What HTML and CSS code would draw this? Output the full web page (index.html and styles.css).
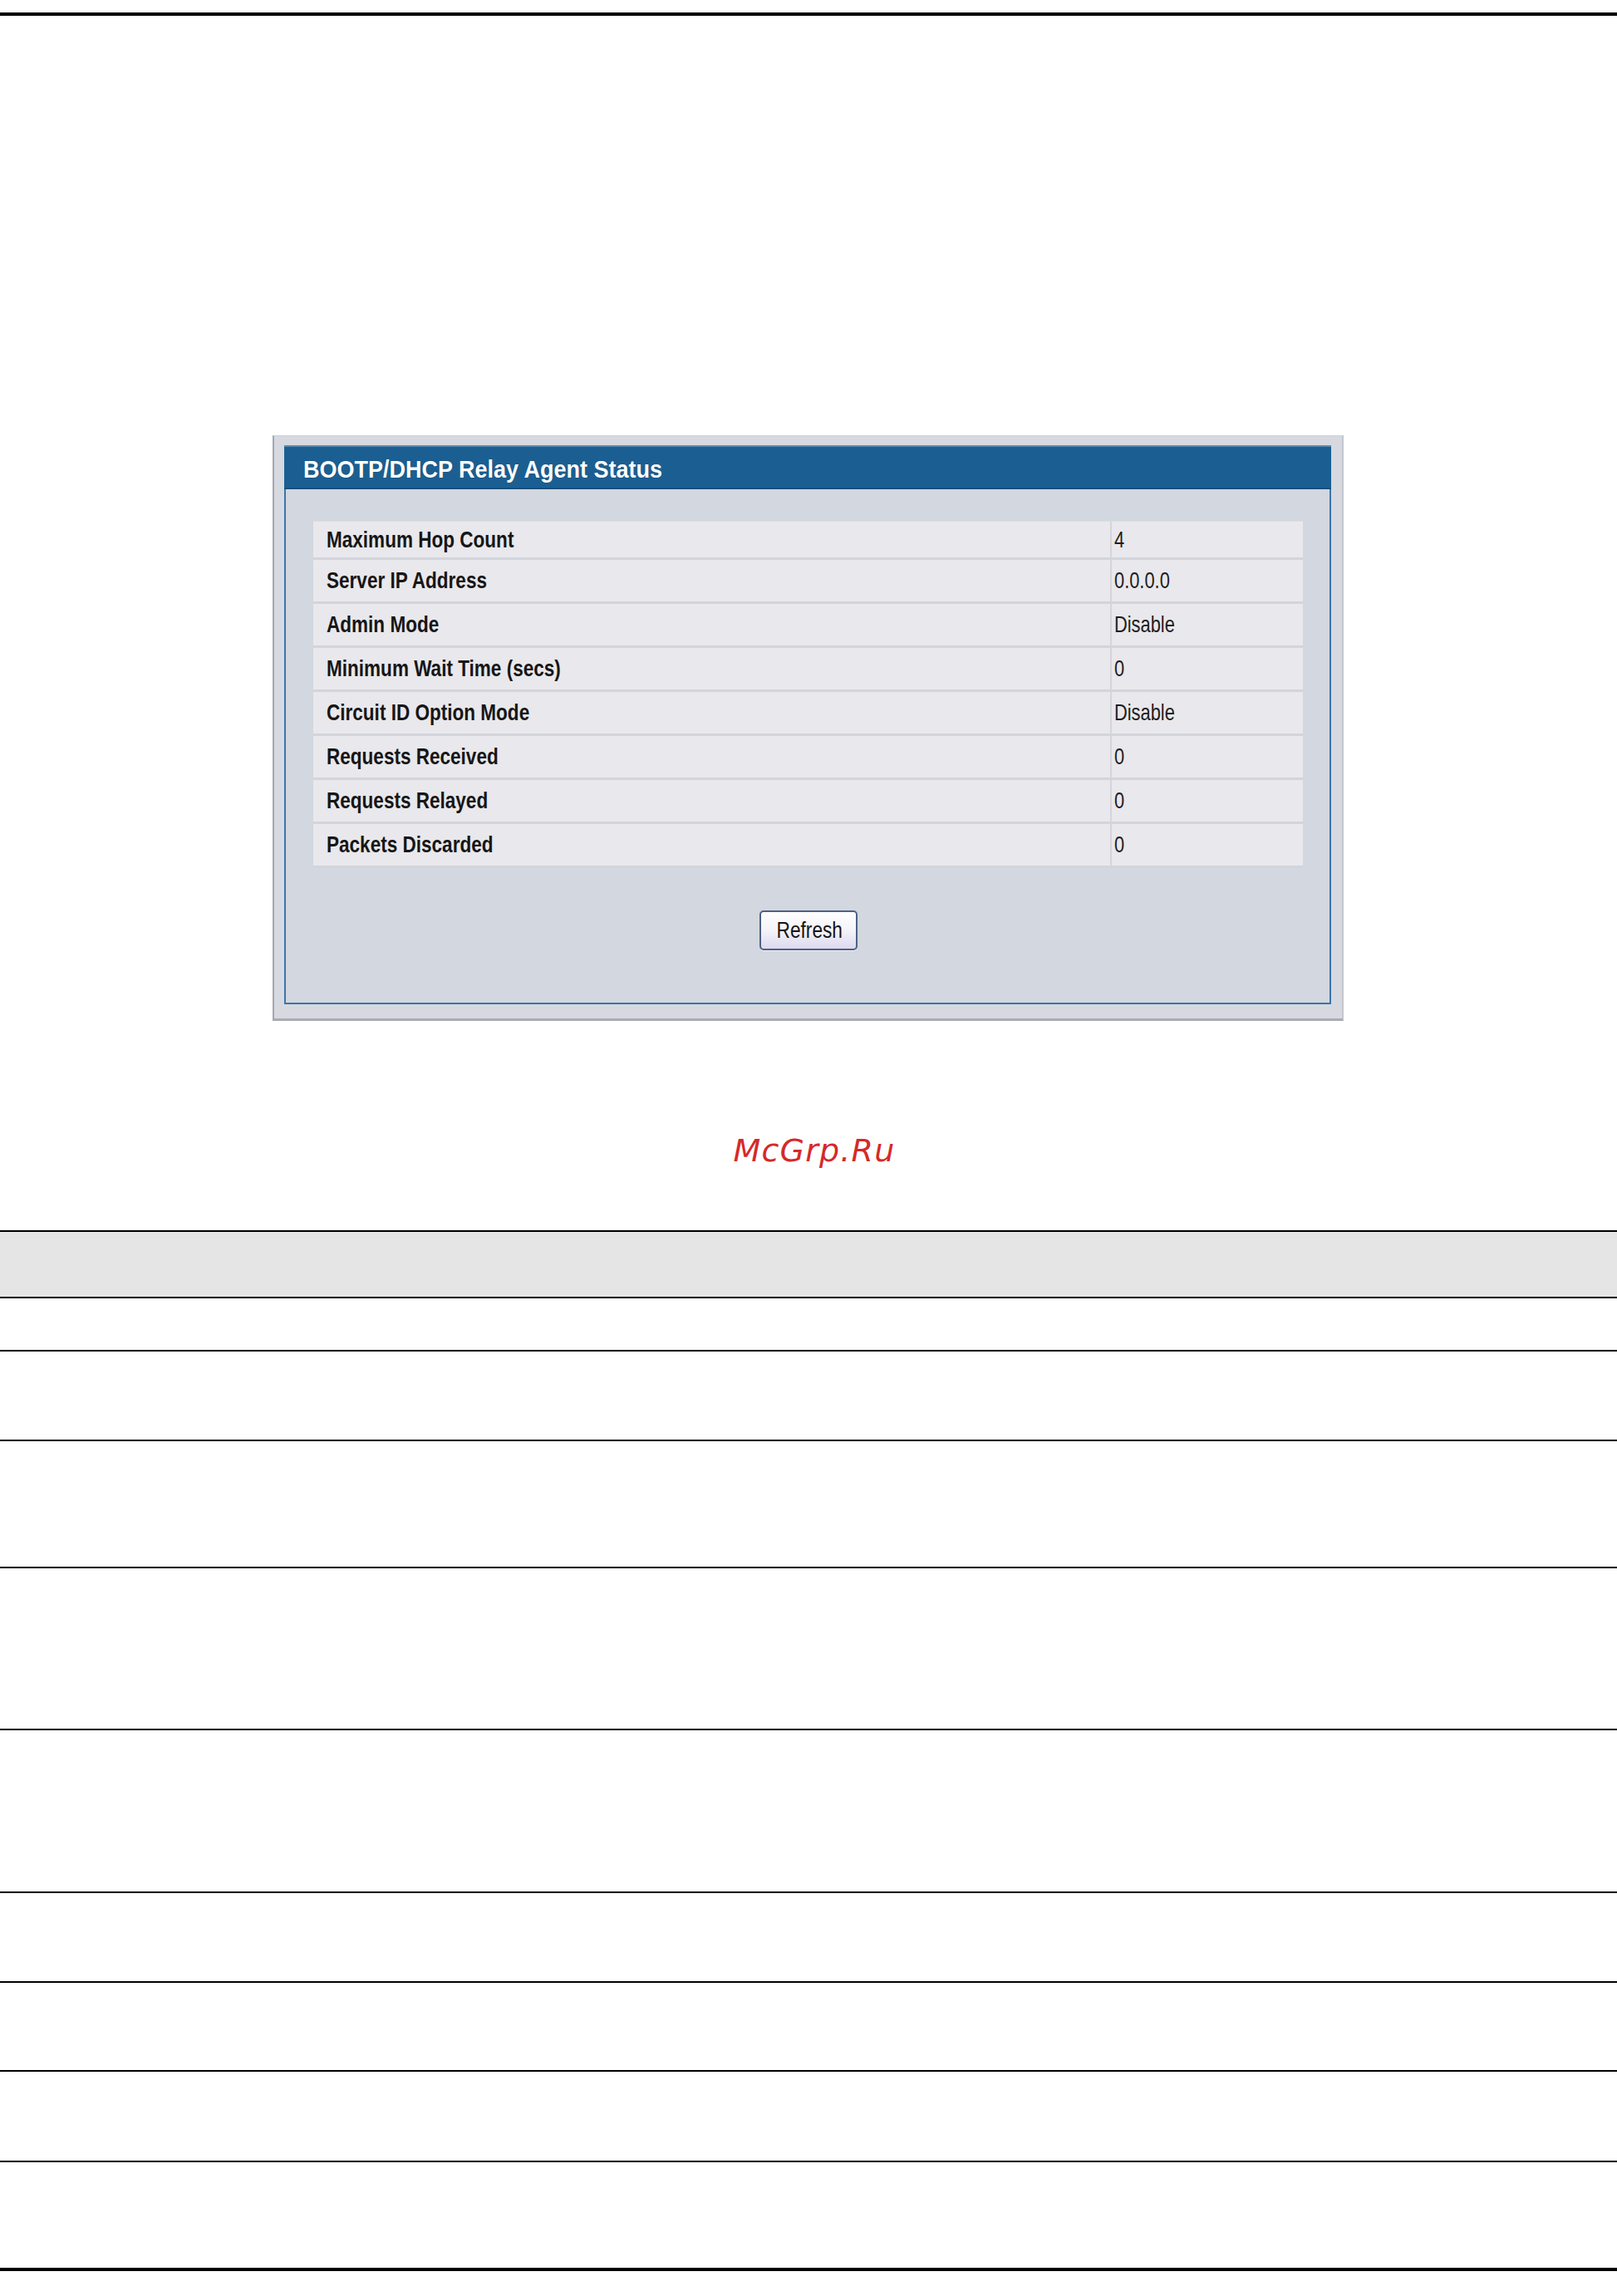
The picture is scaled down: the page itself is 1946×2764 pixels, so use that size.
FILE: index.html
```html
<!DOCTYPE html>
<html lang="en">
<head>
<meta charset="utf-8">
<title>BOOTP/DHCP Relay Agent Status</title>
<link rel="stylesheet" href="styles.css">
</head>
<body>
<div class="top-rule"></div>

<div class="panel">
  <div class="panel-inner">
    <div class="panel-title"><span class="narrow title-text">BOOTP/DHCP Relay Agent Status</span></div>
    <div class="panel-body">
      <table class="status">
        <tr><td class="label"><span class="narrow">Maximum Hop Count</span></td><td class="value"><span class="narrow">4</span></td></tr>
        <tr><td class="label"><span class="narrow">Server IP Address</span></td><td class="value"><span class="narrow">0.0.0.0</span></td></tr>
        <tr><td class="label"><span class="narrow">Admin Mode</span></td><td class="value"><span class="narrow">Disable</span></td></tr>
        <tr><td class="label"><span class="narrow">Minimum Wait Time (secs)</span></td><td class="value"><span class="narrow">0</span></td></tr>
        <tr><td class="label"><span class="narrow">Circuit ID Option Mode</span></td><td class="value"><span class="narrow">Disable</span></td></tr>
        <tr><td class="label"><span class="narrow">Requests Received</span></td><td class="value"><span class="narrow">0</span></td></tr>
        <tr><td class="label"><span class="narrow">Requests Relayed</span></td><td class="value"><span class="narrow">0</span></td></tr>
        <tr><td class="label"><span class="narrow">Packets Discarded</span></td><td class="value"><span class="narrow">0</span></td></tr>
      </table>
      <div class="actions">
        <button class="btn" type="button"><span class="narrow btn-text">Refresh</span></button>
      </div>
    </div>
  </div>
</div>

<div class="watermark">McGrp.Ru</div>

<div class="doc-table">
  <div class="doc-row head"></div>
  <div class="doc-row h62"></div>
  <div class="doc-row h106"></div>
  <div class="doc-row h151"></div>
  <div class="doc-row h193"></div>
  <div class="doc-row h194"></div>
  <div class="doc-row h106"></div>
  <div class="doc-row h105"></div>
  <div class="doc-row h107"></div>
</div>

<div class="bottom-rule"></div>
</body>
</html>
```

FILE: styles.css
```css
html, body {
  margin: 0;
  padding: 0;
  background: #ffffff;
}

body {
  width: 1946px;
  min-height: 2764px;
  font-family: "Liberation Sans", Arial, sans-serif;
  color: #111;
}

/* condensed look: Arial-metric font squeezed horizontally */
.narrow {
  display: inline-block;
  transform: scaleX(0.8);
  transform-origin: 0 50%;
  white-space: nowrap;
}

.top-rule {
  margin-top: 15px;
  height: 4px;
  background: #000;
}

/* ---------- Panel ---------- */
.panel {
  box-sizing: border-box;
  margin: 505px 0 0 328px;
  width: 1289px;
  height: 705px;
  padding: 11px 13px 17px 12px;
  background: #d6d9e0;
  border-top: 1px solid #cdd0d6;
  border-right: 2px solid #c4c7ce;
  border-left: 2px solid #a3a7ae;
  border-bottom: 3px solid #a8acb3;
}

.panel-inner {
  box-sizing: border-box;
  height: 100%;
  background: #d3d7df;
  border: 2px solid #3b76ac;
  border-top: none;
  display: flex;
  flex-direction: column;
}

.panel-title {
  box-sizing: border-box;
  height: 53px;
  margin: 0 -2px;
  padding: 0 0 0 23px;
  background: #1b5f92;
  border-top: 2px solid #5c88ad;
  border-bottom: 2px solid #194f7a;
  color: #ffffff;
  font-weight: bold;
  font-size: 30px;
  line-height: 54px;
  white-space: nowrap;
  overflow: hidden;
}

.title-text {
  transform: scaleX(0.9);
  text-shadow: 0 0 1px #0d3a5e;
}

.panel-body {
  flex: 1;
  padding: 38px 32px 0 33px;
}

.status {
  width: 100%;
  border-collapse: separate;
  border-spacing: 0;
}

.status td {
  height: 50px;
  padding: 0;
  background: #e9e8ec;
  border-bottom: 3px solid #d2d5db;
  font-size: 28px;
  line-height: 40px;
  vertical-align: middle;
  white-space: nowrap;
}

.status tr:first-child td {
  height: 43px;
  border-top: 1px solid #dcdee3;
}

.status .label {
  width: 943px;
  padding-left: 16px;
  font-weight: bold;
  color: #161616;
}

.status .label .narrow {
  transform: scaleX(0.805);
}

.status .value {
  padding-left: 3px;
  border-left: 2px solid #d3d6dc;
  color: #1e1e1e;
}

.status .value .narrow {
  transform: scaleX(0.78);
}

.actions {
  display: flex;
  justify-content: center;
  margin-top: 51px;
}

.btn {
  box-sizing: border-box;
  width: 118px;
  height: 48px;
  padding: 0 0 0 4px;
  border: 2px solid #4d6282;
  border-radius: 5px;
  background: linear-gradient(#ffffff 0%, #f4f3fa 50%, #dcd9ee 100%);
  font-family: inherit;
  font-size: 27px;
  color: #151515;
  box-shadow: 0 1px 0 #eef0f4;
  overflow: hidden;
}

.btn-text {
  transform: scaleX(0.84);
  transform-origin: 50% 50%;
}

/* ---------- Watermark ---------- */
.watermark {
  margin-top: 133px;
  height: 46px;
  text-align: center;
  font-family: "DejaVu Sans", sans-serif;
  font-style: italic;
  font-size: 38px;
  line-height: 46px;
  letter-spacing: 1.2px;
  color: #d42a2a;
  padding-left: 14px;
}

/* ---------- Document table (empty rows) ---------- */
.doc-table {
  margin-top: 73px;
  border-top: 2px solid #000;
}

.doc-row {
  border-bottom: 2px solid #000;
}

.doc-row.head {
  height: 78px;
  background: #e5e5e5;
}

.h62 { height: 62px; }
.h105 { height: 105px; }
.h106 { height: 106px; }
.h107 { height: 107px; }
.h151 { height: 151px; }
.h193 { height: 193px; }
.h194 { height: 194px; }

.bottom-rule {
  margin-top: 127px;
  height: 4px;
  background: #000;
}
```
